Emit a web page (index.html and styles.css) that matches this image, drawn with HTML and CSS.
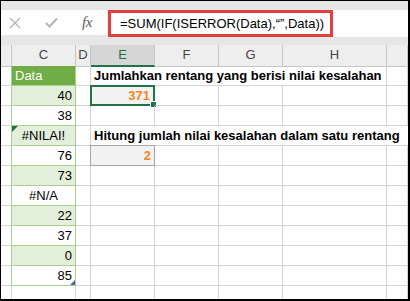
FILE: index.html
```html
<!DOCTYPE html>
<html lang="id">
<head>
<meta charset="UTF-8" />
<title>ISERROR</title>
<link rel="stylesheet" href="styles.css">
</head>
<body>
<div class="window">
  <div class="formula-bar">
    <div class="tools">
      <span class="tool">
        <svg width="12" height="12" viewBox="0 0 12 12"><path d="M1 1 L11 11 M11 1 L1 11" stroke="#b4b4b4" stroke-width="1.3" fill="none"/></svg>
      </span>
      <span class="tool">
        <svg width="13" height="11" viewBox="0 0 13 11"><path d="M1 6 L4.5 9.5 L12 1.5" stroke="#b4b4b4" stroke-width="2" fill="none"/></svg>
      </span>
      <span class="tool fx">fx</span>
    </div>
    <div class="input">
      <span class="formula">=SUM(IF(ISERROR(Data),“”,Data))</span>
    </div>
  </div>
  <div class="band"></div>

  <div class="row head">
    <div class="cell corner"></div>
    <div class="cell">C</div>
    <div class="cell">D</div>
    <div class="cell active">E</div>
    <div class="cell">F</div>
    <div class="cell">G</div>
    <div class="cell">H</div>
    <div class="cell"></div>
  </div>

  <div class="row">
    <div class="cell rh"></div>
    <div class="cell c title-c">Data</div>
    <div class="cell"></div>
    <div class="cell span4 label">Jumlahkan rentang yang berisi nilai kesalahan</div>
    <div class="cell"></div>
  </div>
  <div class="row">
    <div class="cell rh"></div>
    <div class="cell c band-c num">40</div>
    <div class="cell"></div>
    <div class="cell result selected">371<span class="handle"></span></div>
    <div class="cell"></div><div class="cell"></div><div class="cell"></div><div class="cell"></div>
  </div>
  <div class="row">
    <div class="cell rh"></div>
    <div class="cell c num">38</div>
    <div class="cell"></div>
    <div class="cell"></div><div class="cell"></div><div class="cell"></div><div class="cell"></div><div class="cell"></div>
  </div>
  <div class="row">
    <div class="cell rh"></div>
    <div class="cell c band-c err flagged">#NILAI!</div>
    <div class="cell"></div>
    <div class="cell span5 label">Hitung jumlah nilai kesalahan dalam satu rentang</div>
  </div>
  <div class="row">
    <div class="cell rh"></div>
    <div class="cell c num">76</div>
    <div class="cell"></div>
    <div class="cell result boxed">2</div>
    <div class="cell"></div><div class="cell"></div><div class="cell"></div><div class="cell"></div>
  </div>
  <div class="row">
    <div class="cell rh"></div>
    <div class="cell c band-c num">73</div>
    <div class="cell"></div>
    <div class="cell"></div><div class="cell"></div><div class="cell"></div><div class="cell"></div><div class="cell"></div>
  </div>
  <div class="row">
    <div class="cell rh"></div>
    <div class="cell c err">#N/A</div>
    <div class="cell"></div>
    <div class="cell"></div><div class="cell"></div><div class="cell"></div><div class="cell"></div><div class="cell"></div>
  </div>
  <div class="row">
    <div class="cell rh"></div>
    <div class="cell c band-c num">22</div>
    <div class="cell"></div>
    <div class="cell"></div><div class="cell"></div><div class="cell"></div><div class="cell"></div><div class="cell"></div>
  </div>
  <div class="row">
    <div class="cell rh"></div>
    <div class="cell c num">37</div>
    <div class="cell"></div>
    <div class="cell"></div><div class="cell"></div><div class="cell"></div><div class="cell"></div><div class="cell"></div>
  </div>
  <div class="row">
    <div class="cell rh"></div>
    <div class="cell c band-c num">0</div>
    <div class="cell"></div>
    <div class="cell"></div><div class="cell"></div><div class="cell"></div><div class="cell"></div><div class="cell"></div>
  </div>
  <div class="row">
    <div class="cell rh"></div>
    <div class="cell c num last">85<span class="resize"></span></div>
    <div class="cell"></div>
    <div class="cell"></div><div class="cell"></div><div class="cell"></div><div class="cell"></div><div class="cell"></div>
  </div>
  <div class="row">
    <div class="cell"></div>
    <div class="cell"></div>
    <div class="cell"></div>
    <div class="cell"></div><div class="cell"></div><div class="cell"></div><div class="cell"></div><div class="cell"></div>
  </div>
</div>
</body>
</html>
```

FILE: styles.css
```css
body { margin: 0; }
.window { width: 410px; height: 301px; box-sizing: border-box; border: solid #000; border-width: 1px 2px 2px 1px; overflow: hidden; background: #fff; font-family: "Liberation Sans", Arial, sans-serif; color: #000; }

.formula-bar { height: 36px; background: #e6e6e6; display: flex; gap: 1px; padding-top: 9px; box-sizing: border-box; }
.tools { width: 106px; height: 25px; background: #fff; display: flex; align-items: center; gap: 8px; }
.tool { width: 28px; display: flex; justify-content: center; align-items: center; }
.tool.fx { font-family: "Liberation Serif", serif; font-style: italic; font-size: 15px; color: #5a5a5a; letter-spacing: -0.5px; }
.input { flex: 1; height: 27px; background: #fff; }
.formula { display: block; width: 225px; height: 27px; box-sizing: border-box; border: 3px solid #e2403f; padding-left: 9px; font-size: 13px; line-height: 21px; }

.band { height: 8px; background: #e6e6e6; }

.row { display: grid; grid-template-columns: 11px 64px 15px 64px 64px 64px 104px 1fr; height: 20px; }
.cell { box-sizing: border-box; border-right: 1px solid #d4d4d4; border-bottom: 1px solid #d4d4d4; font-size: 13px; line-height: 19px; padding: 0 3px; white-space: nowrap; position: relative; }

.head { height: 21px; background: #eeeeee; }
.head .cell { text-align: center; color: #444; border-right-color: #c6c6c6; border-bottom-color: #c6c6c6; line-height: 20px; padding: 0; }
.head .active { background: #d6d6d6; color: #217346; border-bottom: 2px solid #217346; }

.rh { border-right-color: #a9d08e; }
.c { border-right-color: #a9d08e; border-bottom-color: #a9d08e; }
.title-c { background: #70ad47; color: #fff; }
.band-c { background: #e2efda; }
.num { text-align: right; }
.err { text-align: center; }
.flagged::before { content: ""; position: absolute; left: 0; top: 0; border-top: 6px solid #217346; border-right: 6px solid transparent; }
.resize { position: absolute; right: 0; bottom: 0; width: 0; height: 0; border-bottom: 5px solid #4a5fb8; border-left: 5px solid transparent; }

.label { font-weight: bold; }
.span4 { grid-column: span 4; }
.span5 { grid-column: span 5; border-right: 0; }

.result { text-align: right; font-weight: bold; color: #f7861e; }
.selected { border: 2px solid #217346; margin: -1px 0 0 -1px; background: #f2f2f2; line-height: 17px; }
.handle { position: absolute; right: -4px; bottom: -4px; width: 5px; height: 5px; background: #217346; border: 1px solid #fff; }
.boxed { background: #f2f2f2; border: 1px solid #a6a6a6; margin: -1px 0 0 -1px; }
```
